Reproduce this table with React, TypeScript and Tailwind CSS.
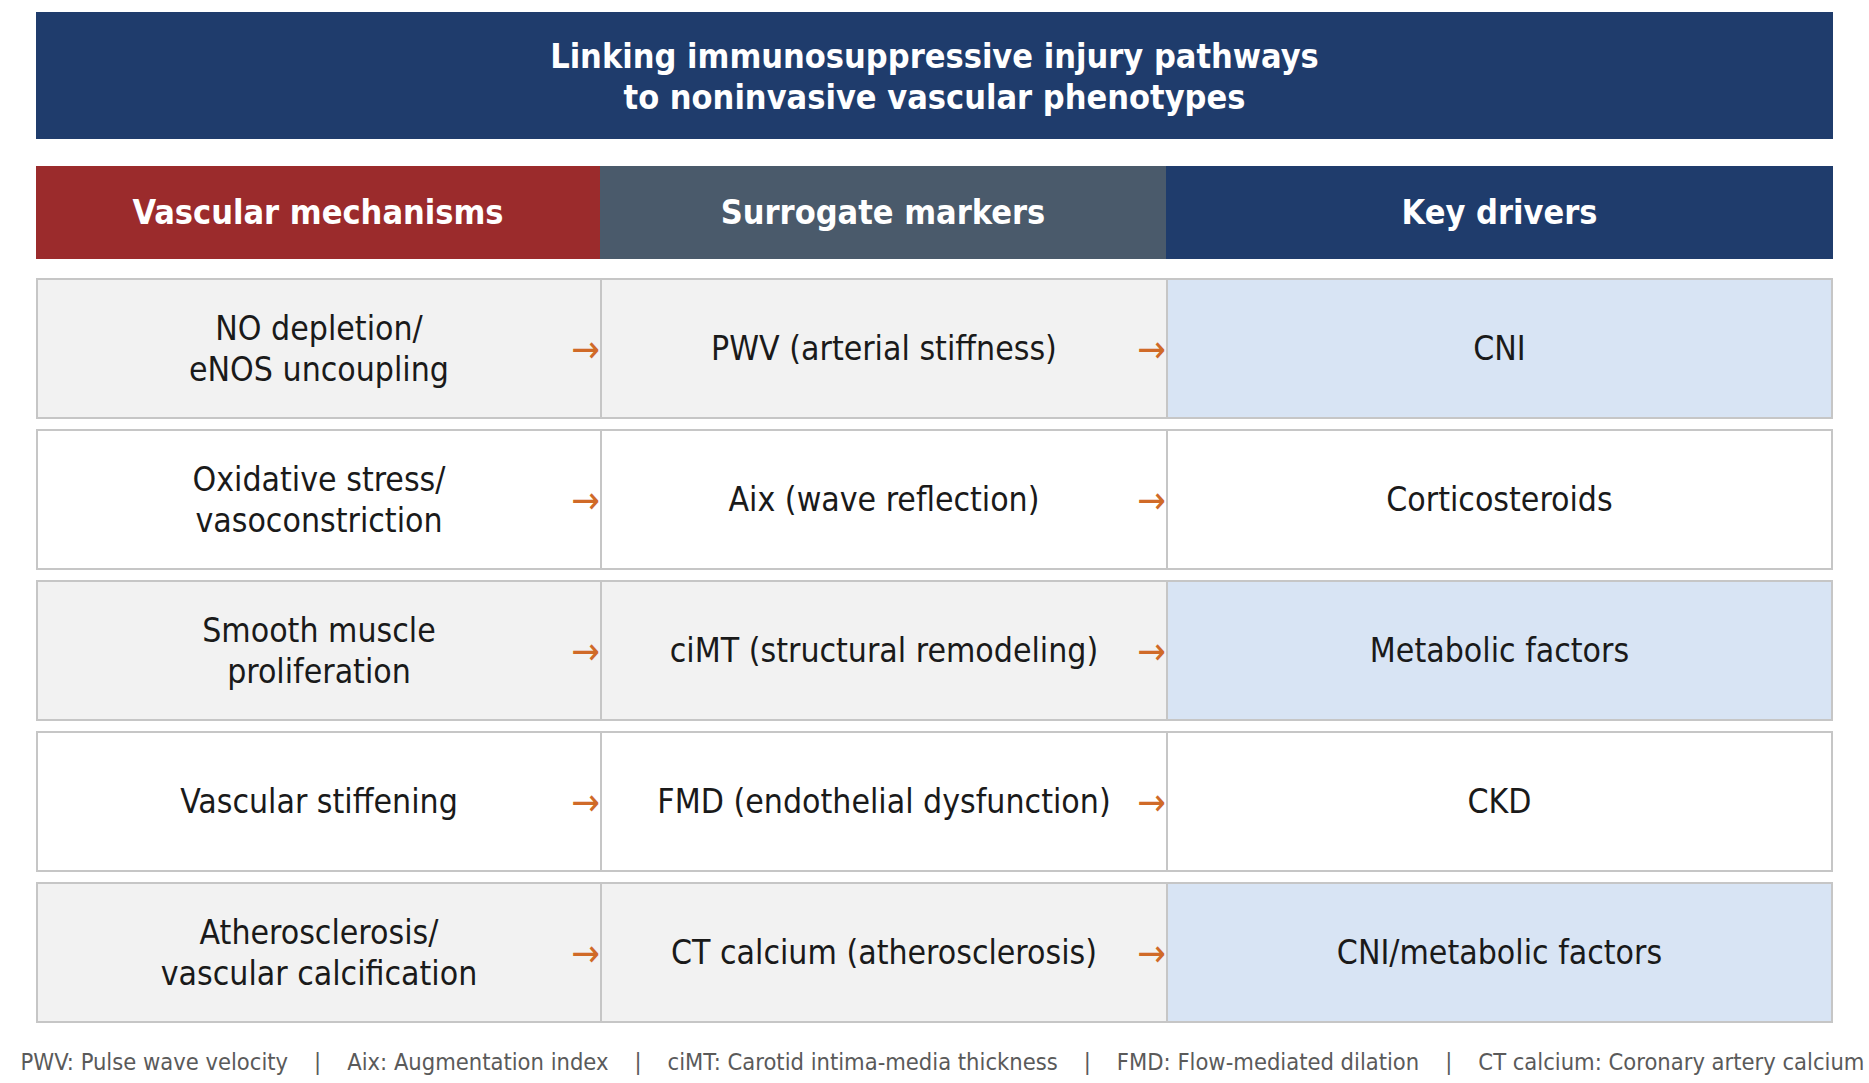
import React from "react";

const rows = [
  { mech: ["NO depletion/", "eNOS uncoupling"], marker: "PWV (arterial stiffness)", driver: "CNI", shaded: true },
  { mech: ["Oxidative stress/", "vasoconstriction"], marker: "Aix (wave reflection)", driver: "Corticosteroids", shaded: false },
  { mech: ["Smooth muscle", "proliferation"], marker: "ciMT (structural remodeling)", driver: "Metabolic factors", shaded: true },
  { mech: ["Vascular stiffening"], marker: "FMD (endothelial dysfunction)", driver: "CKD", shaded: false },
  { mech: ["Atherosclerosis/", "vascular calcification"], marker: "CT calcium (atherosclerosis)", driver: "CNI/metabolic factors", shaded: true },
];

const notes = [
  "PWV: Pulse wave velocity",
  "Aix: Augmentation index",
  "ciMT: Carotid intima-media thickness",
  "FMD: Flow-mediated dilation",
  "CT calcium: Coronary artery calcium",
];

const Arrow = () => (
  <span className="absolute right-0 top-1/2 -translate-y-1/2 text-[38px] leading-none text-[#d06a28]">→</span>
);

const App = () => {
  return (
    <main
      className="w-[1869px] h-[1083px] bg-white overflow-hidden px-[36px] pt-[12px] font-stretch-condensed"
      style={{ fontFamily: '"DejaVu Sans Condensed", "DejaVu Sans", sans-serif' }}
    >
      <header className="h-[127px] pt-[2px] bg-[#1f3c6c] flex flex-col items-center justify-center text-white font-bold text-[34px] leading-[41px]">
        <span>Linking immunosuppressive injury pathways</span>
        <span>to noninvasive vascular phenotypes</span>
      </header>

      <div className="mt-[27px] h-[93px] grid grid-cols-[564px_566px_1fr] text-white font-bold text-[34px]">
        <div className="bg-[#9b2b2c] flex items-center justify-center">Vascular mechanisms</div>
        <div className="bg-[#4a5a6b] flex items-center justify-center">Surrogate markers</div>
        <div className="bg-[#1f3c6c] flex items-center justify-center">Key drivers</div>
      </div>

      <div className="mt-[19px] flex flex-col gap-[10px] text-[#1a1a1a] text-[33.5px] leading-[41px]">
        {rows.map((r, i) => (
          <div
            key={i}
            className="h-[141px] grid grid-cols-[564px_566px_1fr] border-2 border-[#c6c6c6]"
          >
            <div className={`relative flex flex-col items-center justify-center border-r-2 border-[#c6c6c6] ${r.shaded ? "bg-[#f2f2f2]" : "bg-white"}`}>
              {r.mech.map((m) => (
                <span key={m}>{m}</span>
              ))}
              <Arrow />
            </div>
            <div className={`relative flex items-center justify-center border-r-2 border-[#c6c6c6] ${r.shaded ? "bg-[#f2f2f2]" : "bg-white"}`}>
              <span>{r.marker}</span>
              <Arrow />
            </div>
            <div className={`flex items-center justify-center ${r.shaded ? "bg-[#d8e4f4]" : "bg-white"}`}>
              {r.driver}
            </div>
          </div>
        ))}
      </div>

      <footer className="mt-[24px] -mx-[36px] pl-[16px] flex justify-center gap-[26px] whitespace-nowrap text-[#5a5a5a] text-[23.5px] leading-[30px]">
        {notes.map((n, i) => (
          <React.Fragment key={n}>
            {i > 0 && <span>|</span>}
            <span>{n}</span>
          </React.Fragment>
        ))}
      </footer>
    </main>
  );
};

export default App;
